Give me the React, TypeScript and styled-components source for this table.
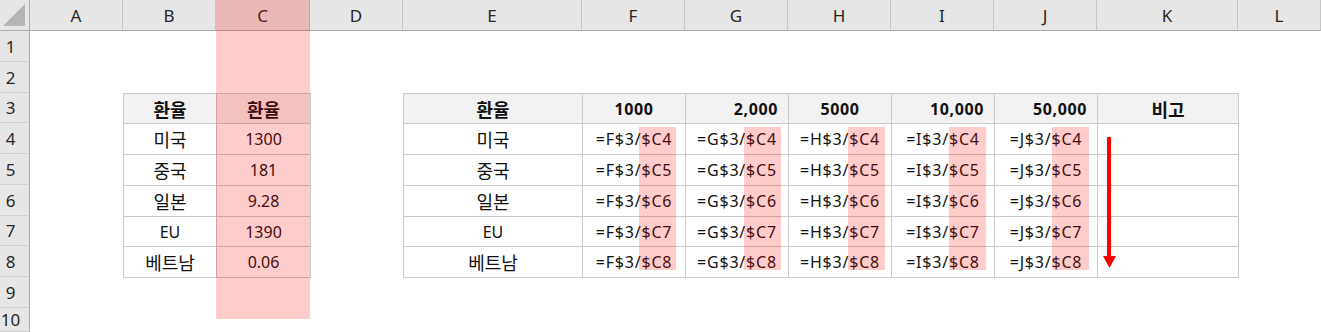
import React from 'react'
import styled, { createGlobalStyle } from 'styled-components'

// sheet geometry (px) – row header + A..L, header + rows 1..10
const COLS = [30, 93, 93, 94, 93, 179, 103, 103, 103, 103, 103, 141, 83]
const ROWS = [31, 31, 31, 30, 31, 31, 31, 30, 31, 31, 24]
const LETTERS = ['A', 'B', 'C', 'D', 'E', 'F', 'G', 'H', 'I', 'J', 'K', 'L']

const countries = ['미국', '중국', '일본', 'EU', '베트남']
const rates = ['1300', '181', '9.28', '1390', '0.06']
const amounts = [
  { label: '1000', right: false },
  { label: '2,000', right: true },
  { label: '5000', right: false },
  { label: '10,000', right: true },
  { label: '50,000', right: true },
]
const formulaCols = ['F', 'G', 'H', 'I', 'J']
// left edge of the $C# highlight inside the formula table
const markLeft = [236, 341, 445, 546, 649]

const isKorean = (s: string) => /[가-힣]/.test(s)

const GlobalStyle = createGlobalStyle`
  html, body {
    margin: 0;
    padding: 0;
    background: #ffffff;
    overflow: hidden;
  }
`

const Sheet = styled.div`
  position: relative;
  display: grid;
  grid-template-columns: ${COLS.map((c) => c + 'px').join(' ')};
  grid-template-rows: ${ROWS.map((r) => r + 'px').join(' ')};
  width: 1321px;
  height: 332px;
  overflow: hidden;
  background: #ffffff;
  font-family: 'Noto Sans', 'Noto Sans CJK KR', sans-serif;
  color: #111111;
`

const Corner = styled.div`
  grid-column: 1;
  grid-row: 1;
  display: flex;
  align-items: flex-end;
  justify-content: flex-end;
  padding: 0 4px 4px 0;
  box-sizing: border-box;
  background: #e6e6e6;
  border-right: 1px solid #ababab;
  border-bottom: 1px solid #ababab;

  &::after {
    content: '';
    width: 22px;
    height: 22px;
    background: #b5b5b5;
    clip-path: polygon(100% 0, 100% 100%, 0 100%);
  }
`

const ColHead = styled.div<{ $col: number }>`
  grid-column: ${(p) => p.$col};
  grid-row: 1;
  display: flex;
  align-items: center;
  justify-content: center;
  box-sizing: border-box;
  background: #e6e6e6;
  border-right: 1px solid #c6c6c6;
  border-bottom: 1px solid #ababab;
  font-size: 17px;
  color: #262626;
  padding-top: 1px;
`

const RowHead = styled.div<{ $row: number }>`
  grid-column: 1;
  grid-row: ${(p) => p.$row};
  display: flex;
  align-items: center;
  justify-content: center;
  box-sizing: border-box;
  padding-right: 8px;
  background: #e6e6e6;
  border-right: 1px solid #ababab;
  border-bottom: 1px solid #cfcfcf;
  font-size: 17px;
  color: #262626;
`

const Table = styled.div<{ $col: number; $span: number; $cols: string }>`
  position: relative;
  grid-column: ${(p) => p.$col} / span ${(p) => p.$span};
  grid-row: 4 / span 6;
  justify-self: start;
  align-self: start;
  display: grid;
  grid-template-columns: ${(p) => p.$cols};
  grid-template-rows: 29px 30px 30px 30px 29px 30px;
  gap: 1px;
  padding: 1px;
  background: #cbcbcb;
`

const Cell = styled.div<{ $head?: boolean; $right?: boolean; $ko?: boolean }>`
  display: flex;
  align-items: center;
  justify-content: ${(p) => (p.$right ? 'flex-end' : 'center')};
  padding-right: ${(p) => (p.$right ? '10px' : '0')};
  background: ${(p) => (p.$head ? '#f2f2f2' : '#ffffff')};
  font-family: ${(p) => (p.$ko ? "'Noto Sans CJK KR', sans-serif" : 'inherit')};
  font-size: ${(p) => (p.$ko ? '18px' : '16px')};
  font-weight: ${(p) => (p.$head ? 700 : 400)};
  letter-spacing: ${(p) => (p.$head && !p.$ko ? '0.6px' : '0')};
  white-space: nowrap;
`

const Formula = styled(Cell)`
  letter-spacing: 0.8px;
`

const Mark = styled.div`
  position: absolute;
  top: 34px;
  width: 37px;
  height: 143px;
  background: rgba(255, 0, 0, 0.2);
  pointer-events: none;
`

const ColumnShade = styled.div`
  position: absolute;
  left: 216px;
  top: 0;
  width: 94px;
  height: 319px;
  background: rgba(255, 0, 0, 0.2);
  pointer-events: none;
`

const Arrow = styled.svg`
  position: absolute;
  left: 1103px;
  top: 137px;
  width: 13px;
  height: 131px;
`

export default function App() {
  return (
    <>
      <GlobalStyle />
      <Sheet>
        <Corner />
        {LETTERS.map((l, i) => (
          <ColHead key={l} $col={i + 2}>
            {l}
          </ColHead>
        ))}
        {Array.from({ length: 10 }, (_, i) => (
          <RowHead key={i} $row={i + 2}>
            {i + 1}
          </RowHead>
        ))}

        {/* 환율 표 (B3:C8) */}
        <Table $col={3} $span={2} $cols="92px 93px">
          <Cell $head $ko>환율</Cell>
          <Cell $head $ko>환율</Cell>
          {countries.map((c, i) => (
            <React.Fragment key={c}>
              <Cell $ko={isKorean(c)}>{c}</Cell>
              <Cell>{rates[i]}</Cell>
            </React.Fragment>
          ))}
        </Table>

        {/* 수식 표 (E3:K8) */}
        <Table $col={6} $span={7} $cols="178px 102px 102px 102px 102px 102px 140px">
          <Cell $head $ko>환율</Cell>
          {amounts.map((a) => (
            <Cell key={a.label} $head $right={a.right}>
              {a.label}
            </Cell>
          ))}
          <Cell $head $ko>비고</Cell>
          {countries.map((c, r) => (
            <React.Fragment key={c}>
              <Cell $ko={isKorean(c)}>{c}</Cell>
              {formulaCols.map((f) => (
                <Formula key={f}>{`=${f}$3/$C${r + 4}`}</Formula>
              ))}
              <Cell />
            </React.Fragment>
          ))}
          {markLeft.map((x) => (
            <Mark key={x} style={{ left: x }} />
          ))}
        </Table>

        <ColumnShade />
        <Arrow viewBox="0 0 13 131">
          <rect x="4" y="0" width="4" height="121" fill="#ff0000" />
          <polygon points="0,119 13,119 6.5,131" fill="#ff0000" />
        </Arrow>
      </Sheet>
    </>
  )
}
